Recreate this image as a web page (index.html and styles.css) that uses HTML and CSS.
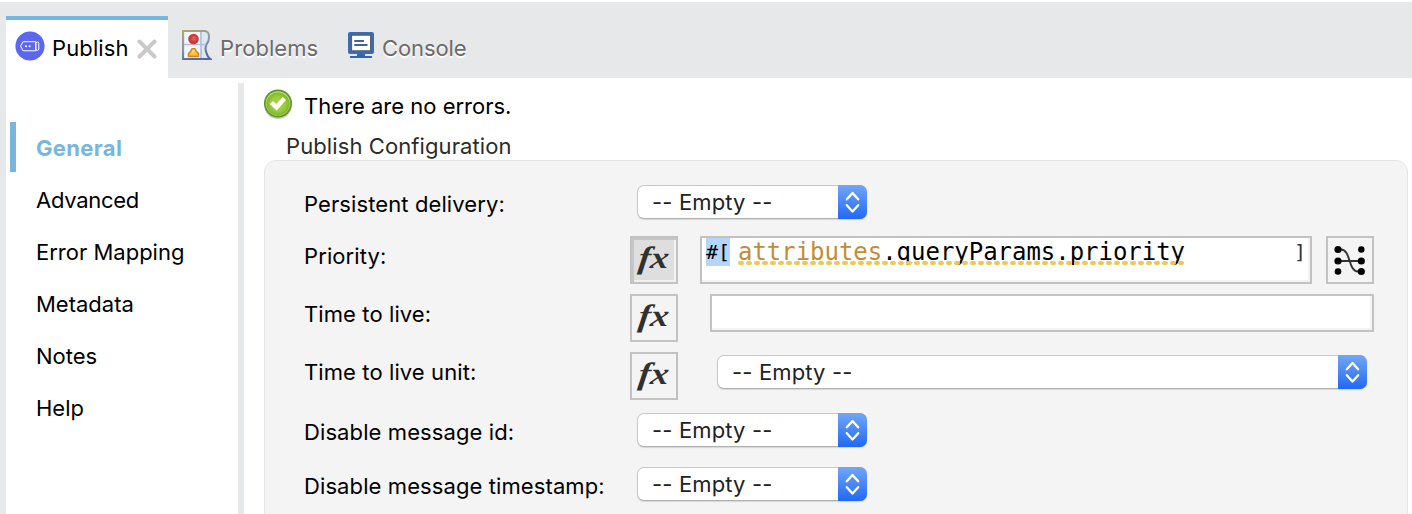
FILE: index.html
```html
<!DOCTYPE html>
<html lang="en">
<head>
<meta charset="utf-8">
<title>Publish</title>
<link rel="stylesheet" href="styles.css">
</head>
<body>
<svg class="defs" width="0" height="0" aria-hidden="true">
  <defs>
    <symbol id="updown" viewBox="0 0 29 34"><path d="M8.8 14.3 14.5 8l5.700 6.300M8.800 20.200l5.700 6.300 5.700-6.300" fill="none" stroke="#fff" stroke-width="2.300" stroke-linecap="round" stroke-linejoin="round"/></symbol>
  </defs>
</svg>
<div class="window">
  <header class="tabs">
    <div class="tab tab-active">
      <svg class="icon-publish" width="30" height="30" viewBox="0 0 30 30"><circle cx="15" cy="15" r="14.600" fill="#5c67ee"/><g fill="none" stroke="#fff" stroke-width="1"><path d="M20.800 10.700H9q-2 0-2 2v.5q-1.300.3-1.300 1.900T7 17v.8q0 2 2 2h11.800z"/><rect x="20.800" y="11" width="3" height="8.400" rx="1.500"/></g><circle cx="11" cy="15.200" r="1" fill="#fff"/><circle cx="14.600" cy="15.200" r="1" fill="#fff"/></svg>
      <span class="t-publish">Publish</span>
      <svg class="icon-close" width="20" height="20" viewBox="0 0 20 20"><path d="m2.500 2.500 15 15m0-15-15 15" stroke="#c9c9c9" stroke-width="4" stroke-linecap="round"/></svg>
    </div>
    <div class="tab tab-problems">
      <svg width="30" height="32" viewBox="0 0 30 32">
        <defs><linearGradient id="edge" x1="0" y1="0" x2=".35" y2="1"><stop offset="0" stop-color="#b5a660"/><stop offset=".55" stop-color="#8b97ac"/><stop offset="1" stop-color="#566b96"/></linearGradient><linearGradient id="gold" x1="0" y1="0" x2="0" y2="1"><stop offset="0" stop-color="#ffe87b"/><stop offset="1" stop-color="#f3ad35"/></linearGradient></defs>
        <path d="M1 2h22q4 .5 4 5.500 0 5-2 7-2.500 4-.7 9 1.500 5 4 6.500H1z" fill="#dbe9f7" stroke="url(#edge)" stroke-width="2"/>
        <path d="M3 3h15v26H3z" fill="#f2f7fc"/>
        <path d="M2 15.500h22M19 3v26" stroke="#b3c0df" stroke-width="1.700"/>
        <circle cx="11.500" cy="10" r="5.300" fill="#d13838"/><circle cx="12" cy="9.500" r="2.500" fill="#df5858"/>
        <path d="M6.500 27.500V24.500q2.500-1.500 3.500-4.700h3q1 3.200 3.500 4.700v3z" fill="url(#gold)" stroke="#d48620" stroke-width="1.600" stroke-linejoin="round"/>
        <path d="M1 2V30h27" fill="none" stroke="url(#edge)" stroke-width="2"/>
      </svg>
      <span class="t-problems">Problems</span>
    </div>
    <div class="tab tab-console">
      <svg width="26" height="26" viewBox="0 0 26 26"><rect width="26" height="22" rx="2" fill="#3c6cb4"/><rect x="3.300" y="3" width="19.500" height="16" fill="#fff" stroke="#54627a" stroke-width="1.600"/><path d="M6.300 9h9.700M6.300 13h13.200" stroke="#43629b" stroke-width="1.800"/><path d="M9 22h8v2H9zM2 24h22v2H2z" fill="#3763ad"/></svg>
      <span class="t-console">Console</span>
    </div>
  </header>
  <div class="body">
    <nav class="side">
      <a class="item item-active">General</a>
      <a class="item item-advanced">Advanced</a>
      <a class="item">Error Mapping</a>
      <a class="item">Metadata</a>
      <a class="item">Notes</a>
      <a class="item">Help</a>
    </nav>
    <main class="main">
      <div class="status">
        <svg width="30" height="31" viewBox="0 0 30 31"><defs><radialGradient id="ok"><stop offset="0" stop-color="#add84a"/><stop offset=".65" stop-color="#9acb3a"/><stop offset="1" stop-color="#7fb530"/></radialGradient></defs><ellipse cx="15" cy="17.300" rx="13.500" ry="12.800" fill="#c3c9b8"/><circle cx="15" cy="14.500" r="14" fill="#5e9627"/><circle cx="15" cy="14.500" r="12.300" fill="#b9dc72"/><circle cx="15" cy="14.900" r="11.500" fill="url(#ok)"/><path d="m8.300 13.500 5.200 4.800 7.900-8.700" fill="none" stroke="#fff" stroke-width="4.400"/></svg>
        <span>There are no errors.</span>
      </div>
      <h2 class="group-title">Publish Configuration</h2>
      <section class="panel">
        <div class="row row-first">
          <label class="label">Persistent delivery:</label>
          <div class="select"><span>-- Empty --</span><svg class="knob"><use href="#updown"/></svg></div>
        </div>
        <div class="row">
          <label class="label">Priority:</label>
          <button class="square fx fx-on"><span>fx</span></button>
          <div class="editor"><span class="open">#[</span><span class="code"><b class="attr">attributes</b>.queryParams.priority<svg class="squiggle" width="447" height="4"><path d="M2 2h443" stroke="#f0c850" stroke-width="4" stroke-linecap="round" stroke-dasharray="2 6"/></svg></span><span class="close">]</span></div>
          <button class="square map"><svg width="32" height="32" viewBox="0 0 32 32"><path d="M4 5.500h3c10 0 7 22 17 22h3M4 17h23" fill="none" stroke="#333" stroke-width="1.900"/><circle cx="4" cy="5.500" r="3.600"/><circle cx="4" cy="17" r="3.600"/><circle cx="4" cy="27.500" r="3.300"/><circle cx="27.300" cy="5.500" r="3.200"/><circle cx="27.300" cy="17" r="3.600"/><circle cx="27.300" cy="27.500" r="3.600"/></svg></button>
        </div>
        <div class="row">
          <label class="label">Time to live:</label>
          <button class="square fx"><span>fx</span></button>
          <div class="input"></div>
        </div>
        <div class="row">
          <label class="label">Time to live unit:</label>
          <button class="square fx"><span>fx</span></button>
          <div class="select select-wide"><span>-- Empty --</span><svg class="knob"><use href="#updown"/></svg></div>
        </div>
        <div class="row row-id">
          <label class="label">Disable message id:</label>
          <div class="select"><span>-- Empty --</span><svg class="knob"><use href="#updown"/></svg></div>
        </div>
        <div class="row row-last">
          <label class="label">Disable message timestamp:</label>
          <div class="select"><span>-- Empty --</span><svg class="knob"><use href="#updown"/></svg></div>
        </div>
      </section>
    </main>
  </div>
</div>
</body>
</html>
```
FILE: styles.css
```css
* { box-sizing: border-box; }
body { margin: 0; overflow: hidden; background: #fff; color: #000; font: 22px/30px Inter, "Liberation Sans", sans-serif; }
.defs { display: block; }
.window { height: 514px; display: flex; flex-direction: column; overflow: hidden; }
svg { flex: none; }
.tabs { height: 78px; flex: none; display: flex; background: #e7e8ea; border-top: 2px solid #fff; padding: 14px 0 0 6px; }
.tab { display: flex; align-items: flex-start; color: #6b6b6b; text-shadow: 0 2px 0 #fff; white-space: nowrap; }
.tab span { padding-top: 17px; }
.tab-active { width: 162px; background: #fff; border-top: 4px solid #78b6dc; padding-left: 9px; color: #000; text-shadow: none; }
.tab-active span { padding-top: 13px; margin-left: 7px; width: 78px; letter-spacing: .12px; }
.icon-publish { margin-top: 11px; }
.icon-close { margin: 19px 0 0 7px; }
.tab-problems { width: 179px; padding-left: 14px; }
.tab-problems svg { margin-top: 13px; }
.tab-problems span { margin-left: 8px; letter-spacing: .08px; }
.tab-console svg { margin-top: 16px; }
.tab-console { padding-left: 1px; }
.tab-console span { margin-left: 8px; letter-spacing: -.1px; }
.body { flex: 1; min-height: 0; display: flex; border-left: 6px solid #e7e8ea; }
.side { width: 232px; flex: none; padding: 44px 0 0 4px; display: flex; flex-direction: column; gap: 2px; }
.item { height: 50px; line-height: 52px; padding-left: 26px; }
.item-active { color: #78b6dc; font-weight: 700; letter-spacing: .35px; border-left: 6px solid #78b6dc; padding-left: 20px; }
.item-advanced { letter-spacing: -.28px; }
.main { flex: 1; min-width: 0; margin-top: 5px; padding: 6px 4px 0 20px; border-left: 6px solid #e7e8ea; }
.status { display: flex; height: 42px; margin-left: -1px; }
.status span { padding-top: 2px; margin-left: 11px; }
.group-title { margin: 0; padding-left: 22px; height: 29px; font-size: 22px; line-height: 30px; font-weight: 400; letter-spacing: .1px; color: #2b2b2b; }
.panel { height: 380px; border: 1px solid #e4e4e4; border-radius: 12px; background: #f4f4f4; padding: 17px 33px 0 39px; display: flex; flex-direction: column; gap: 10px; }
.row { height: 48px; flex: none; display: flex; align-items: flex-start; }
.label { width: 326px; flex: none; white-space: nowrap; line-height: 40px; letter-spacing: .1px; }
.row-first, .row-last { align-items: center; }
.row-first .label, .row-last .label { padding-top: 4px; }
.row-first .label, .row-last .label, .row-id .label { width: 333px; }
.row-id { height: 40px; align-items: center; }
.row-id .label { padding-top: 4px; }
.select { width: 230px; height: 34px; flex: none; display: flex; justify-content: space-between; background: #fff; border: 1px solid #c9c9c9; border-bottom-color: #b0b0b0; border-radius: 7px; box-shadow: 0 1px 1px #d8d8d8; color: #222; padding-left: 14px; line-height: 33px; letter-spacing: .15px; }
.select-wide { width: 650px; margin: 3px 0 0 39px; }
.knob { width: 29px; height: 34px; margin: -1px; border-radius: 0 7px 7px 0; background: linear-gradient(#73a6f7, #1f69f6); }
.square { width: 48px; height: 48px; flex: none; padding: 0; border: 2px solid #c2c2c2; background: #f4f4f4; display: grid; place-items: center; }
.fx { color: #303030; font: italic 700 31px/40px "Liberation Serif", serif; }
.fx span { transform: translateY(-2px) scaleX(1.18) skewX(-6deg); }
.fx-on { background: #dedede; box-shadow: inset 2px 2px #c6c6c6, inset -2px -2px #f2f2f2; }
.editor { width: 612px; height: 48px; margin: 0 14px 0 22px; flex: none; display: flex; border: 2px solid #c2c2c2; background: #fff; box-shadow: inset -2px -2px #f3f3f3; padding-left: 4px; font: 20px/28px "DejaVu Sans Mono", monospace; }
.open { height: 28px; width: 24px; background: #b5d5fb; line-height: 28px; white-space: nowrap; letter-spacing: -.05px; }
.code { position: relative; margin-left: 8px; height: 28px; font-size: 24px; letter-spacing: -.03px; overflow: hidden; }
.attr { font-weight: 400; color: #c38c35; }
.squiggle { position: absolute; left: 0; top: 23px; }
.close { margin-left: auto; padding-right: 4px; line-height: 28px; color: #333; }
.input { width: 664px; height: 38px; margin-left: 32px; border: 2px solid #c2c2c2; background: #fff; box-shadow: inset -2px -2px #f3f3f3; }
```
